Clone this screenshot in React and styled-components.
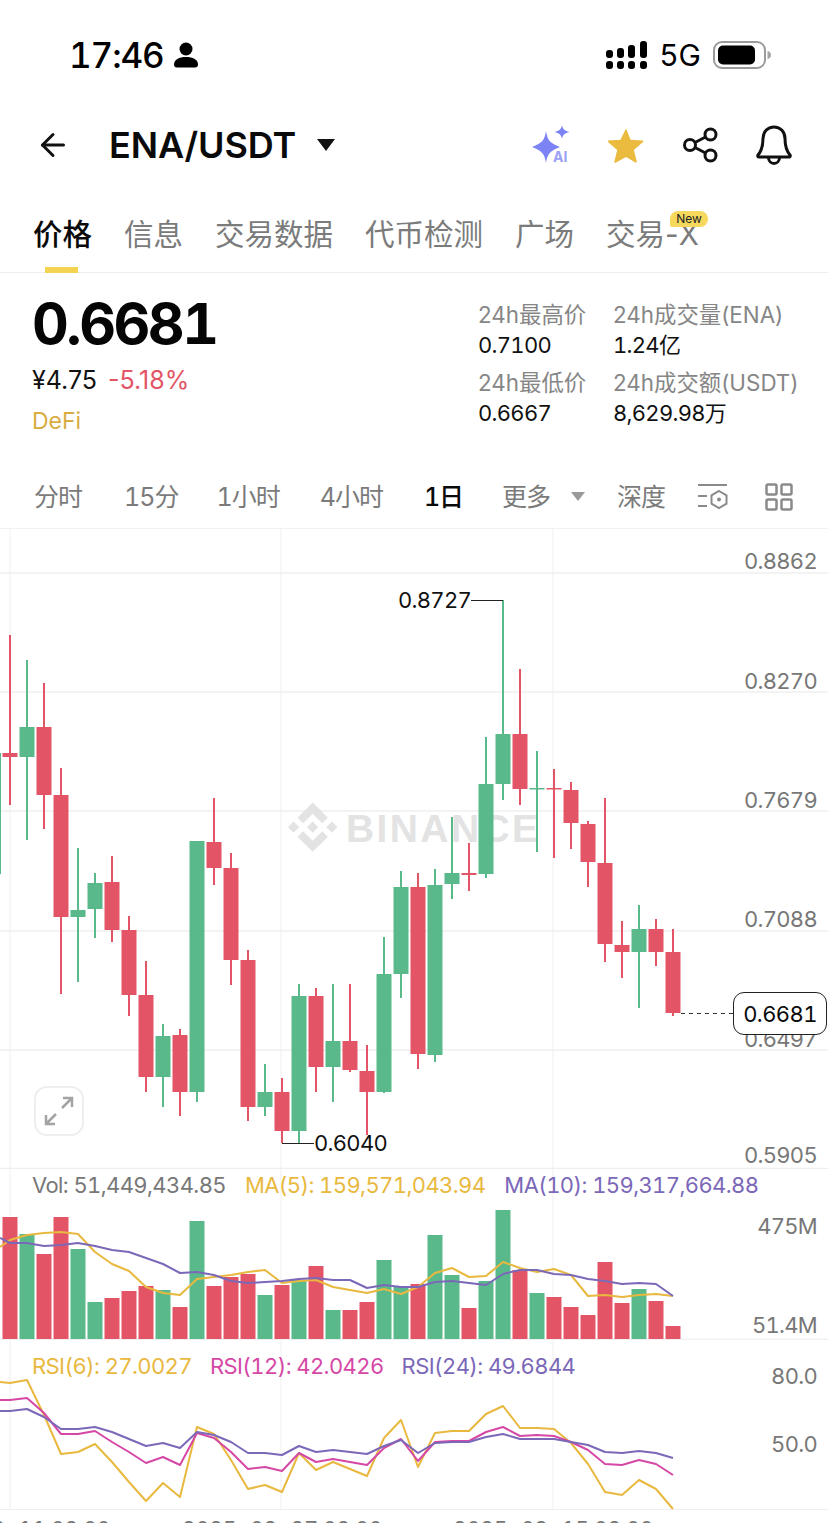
import React from "react";
import styled, { createGlobalStyle } from "styled-components";
import { ArrowLeft } from "lucide-react";

const GREEN = "#5ab98a";
const RED = "#e35566";
const YELLOW = "#e8b83f";
const PURPLE = "#7b68b8";
const MAGENTA = "#d548a6";
const GRID = "#efefef";
const GREY = "#777777";

// [colour, wick top, body top, body bottom, wick bottom]
const candles = [
  ["r", 635, 753, 757, 805],
  ["g", 660, 727, 757, 840],
  ["r", 683, 727, 795, 829],
  ["r", 768, 795, 917, 994],
  ["g", 848, 910, 917, 982],
  ["g", 873, 883, 909, 938],
  ["r", 856, 882, 930, 942],
  ["r", 916, 930, 995, 1016],
  ["r", 961, 995, 1077, 1092],
  ["g", 1024, 1036, 1077, 1107],
  ["r", 1029, 1035, 1092, 1116],
  ["g", 841, 841, 1092, 1102],
  ["r", 798, 842, 868, 885],
  ["r", 853, 868, 960, 985],
  ["r", 950, 960, 1107, 1121],
  ["g", 1064, 1092, 1107, 1116],
  ["r", 1078, 1092, 1131, 1143],
  ["g", 984, 996, 1131, 1143],
  ["r", 988, 996, 1067, 1092],
  ["g", 984, 1041, 1067, 1102],
  ["r", 984, 1041, 1070, 1072],
  ["r", 1045, 1071, 1092, 1135],
  ["g", 937, 974, 1092, 1093],
  ["g", 871, 887, 974, 998],
  ["r", 873, 887, 1054, 1069],
  ["g", 869, 885, 1055, 1062],
  ["g", 817, 873, 884, 899],
  ["r", 843, 873, 875, 891],
  ["g", 737, 784, 874, 878],
  ["g", 600, 734, 784, 800],
  ["r", 669, 734, 789, 805],
  ["g", 751, 788, 789.5, 852],
  ["r", 769, 788, 789.5, 858],
  ["r", 782, 790, 823, 849],
  ["r", 821, 824, 862, 887],
  ["r", 798, 863, 944, 962],
  ["r", 921, 945, 952, 978],
  ["g", 905, 929, 952, 1008],
  ["r", 919, 929, 952, 966],
  ["r", 929, 952, 1013, 1016],
];

const volumeTops = [
  1217, 1234, 1254, 1217, 1249, 1302, 1298, 1291, 1286, 1290, 1307, 1221, 1286, 1277, 1274, 1295,
  1285, 1280, 1266, 1310, 1310, 1302, 1260, 1287, 1284, 1235, 1275, 1308, 1281, 1210, 1270, 1293,
  1297, 1307, 1315, 1262, 1303, 1289, 1301, 1326,
];

const ma5 = [1247, 1240, 1235, 1233, 1232, 1234, 1252, 1264, 1271, 1287, 1293, 1295, 1279, 1277, 1275, 1272, 1270, 1283, 1281, 1280, 1287, 1290, 1293, 1289, 1294, 1287, 1273, 1268, 1277, 1276, 1262, 1268, 1272, 1269, 1275, 1296, 1295, 1297, 1295, 1294, 1296];
const ma10 = [1238, 1243, 1243, 1246, 1245, 1243, 1246, 1250, 1252, 1258, 1264, 1273, 1272, 1275, 1281, 1283, 1282, 1281, 1279, 1278, 1280, 1280, 1288, 1285, 1287, 1287, 1282, 1281, 1283, 1285, 1274, 1270, 1270, 1274, 1275, 1279, 1281, 1284, 1283, 1284, 1296];

const rsi6 = [1382, 1383, 1380, 1415, 1454, 1452, 1444, 1462, 1482, 1501, 1483, 1497, 1427, 1434, 1460, 1489, 1485, 1492, 1453, 1470, 1462, 1469, 1476, 1438, 1420, 1467, 1433, 1431, 1431, 1414, 1406, 1428, 1428, 1429, 1443, 1464, 1492, 1495, 1480, 1489, 1509];
const rsi12 = [1400, 1400, 1398, 1413, 1434, 1434, 1431, 1442, 1452, 1463, 1457, 1465, 1433, 1438, 1452, 1469, 1467, 1471, 1453, 1462, 1459, 1462, 1465, 1448, 1439, 1461, 1442, 1441, 1441, 1432, 1427, 1436, 1435, 1436, 1442, 1450, 1464, 1465, 1460, 1464, 1475];
const rsi24 = [1411, 1411, 1409, 1417, 1429, 1429, 1427, 1432, 1439, 1446, 1443, 1448, 1432, 1435, 1442, 1453, 1453, 1455, 1446, 1452, 1450, 1452, 1454, 1446, 1440, 1453, 1443, 1442, 1442, 1437, 1434, 1439, 1439, 1439, 1442, 1445, 1452, 1453, 1451, 1453, 1458];

const candleX = (i) => 10 + 17 * i;
const linePoints = (values) => values.map((y, i) => `${candleX(i - 1) < 0 ? 0 : candleX(i - 1)},${y}`).join(" ");
const colourOf = (c) => (c === "g" ? GREEN : RED);

const priceLabels = [
  ["0.8862", 569],
  ["0.8270", 689],
  ["0.7679", 808],
  ["0.7088", 927],
  ["0.6497", 1047],
  ["0.5905", 1163],
];

const GlobalStyle = createGlobalStyle`
  html, body {
    margin: 0;
    padding: 0;
    background: #fff;
  }
  body {
    font-family: Inter, "Noto Sans CJK SC", sans-serif;
    font-variant-numeric: tabular-nums;
  }
`;

const Page = styled.div`
  width: 828px;
  height: 1523px;
  overflow: hidden;
  background: #fff;
`;

const StatusBar = styled.div`
  height: 110px;
  padding: 0 56px 0 69px;
  box-sizing: border-box;
  display: flex;
  align-items: center;
  color: #000;
`;

const Clock = styled.span`
  font-size: 35px;
  font-weight: 500;
  letter-spacing: -1.1px;
  margin-right: 10px;
`;

const StatusRight = styled.div`
  margin-left: auto;
  display: flex;
  align-items: center;
`;

const NetLabel = styled.span`
  font-size: 30px;
  font-weight: 400;
  margin: 0 12px 0 11px;
`;

const Header = styled.div`
  height: 70px;
  padding: 0 36px 0 37px;
  display: flex;
  align-items: center;
`;

const BackIcon = styled(ArrowLeft)`
  width: 36px;
  height: 36px;
  margin-left: -2px;
  color: #111;
`;

const Pair = styled.span`
  margin-left: 38px;
  font-size: 36px;
  font-weight: 600;
  color: #0a0a0a;
  letter-spacing: -0.1px;
`;

const Caret = styled.span`
  margin-left: ${(p) => p.$gap || 21}px;
  width: 0;
  height: 0;
  border-left: ${(p) => p.$size || 9}px solid transparent;
  border-right: ${(p) => p.$size || 9}px solid transparent;
  border-top: ${(p) => (p.$size ? p.$size + 2 : 12)}px solid ${(p) => p.$color || "#111"};
`;

const HeaderIcons = styled.div`
  margin-left: auto;
  display: flex;
  align-items: center;
  gap: 38px;

  & > svg:first-child {
    margin-right: -4px;
  }
`;

const Tabs = styled.div`
  height: 93px;
  box-sizing: border-box;
  padding: 34px 0 0 33px;
  display: flex;
  gap: 32px;
  border-bottom: 1px solid #eeeeee;
`;

const Tab = styled.div`
  position: relative;
  height: 40px;
  line-height: 40px;
  font-size: 29.5px;
  font-variant-numeric: normal;
  color: ${(p) => (p.$active ? "#0a0a0a" : "#7b7b7b")};
  font-weight: ${(p) => (p.$active ? 500 : 400)};
  white-space: nowrap;

  &::after {
    content: "";
    display: ${(p) => (p.$active ? "block" : "none")};
    position: absolute;
    left: 12px;
    top: 53px;
    width: 33px;
    height: 6px;
    background: #f3d350;
  }
`;

const NewBadge = styled.span`
  position: absolute;
  left: 64px;
  top: -3px;
  width: 38px;
  height: 16px;
  border-radius: 8px 8px 8px 2px;
  background: #f6d85d;
  font-size: 12px;
  line-height: 16px;
  text-align: center;
  color: #222;
`;

const Summary = styled.div`
  height: 192px;
  box-sizing: border-box;
  display: flex;
  justify-content: space-between;
`;

const PriceBlock = styled.div`
  padding: 26px 0 0 32px;
`;

const LastPrice = styled.div`
  font-size: 57px;
  line-height: 50px;
  font-weight: 700;
  color: #050505;
  letter-spacing: -2.5px;
`;

const SubPrice = styled.div`
  margin-top: 16px;
  line-height: 30px;
  font-size: 25px;
  font-variant-numeric: normal;
  color: #111;
  display: flex;
  gap: 11px;
`;

const Change = styled.span`
  color: ${RED};
`;

const Tag = styled.div`
  margin-top: 11px;
  line-height: 30px;
  font-size: 23px;
  color: #d8ac3f;
`;

const StatsGrid = styled.div`
  width: 350px;
  padding-top: 27px;
  display: grid;
  grid-template-columns: 135px 1fr;
  grid-auto-rows: 60px;
  row-gap: 8px;
`;

const Stat = styled.div`
  line-height: 30px;
  white-space: nowrap;
`;

const StatLabel = styled.div`
  font-size: 22.4px;
  font-variant-numeric: normal;
  color: #868686;
`;

const StatValue = styled.div`
  font-size: 22px;
  letter-spacing: -0.7px;
  color: #111;
`;

const Intervals = styled.div`
  height: 64px;
  box-sizing: border-box;
  padding: 0 34px;
  display: flex;
  align-items: center;
  border-bottom: 1px solid #f1f1f1;
`;

const Interval = styled.span`
  margin-left: ${(p) => p.$gap ?? 41}px;
  font-size: 25px;
  letter-spacing: -1px;
  line-height: 36px;
  white-space: nowrap;
  color: ${(p) => (p.$active ? "#0a0a0a" : "#7b7b7b")};
  font-weight: ${(p) => (p.$active ? 500 : 400)};
`;

const IntervalIcon = styled.svg`
  display: block;
  flex: none;
  margin-left: ${(p) => p.$gap}px;
`;

const Pane = styled.div`
  position: relative;
  height: ${(p) => p.$height}px;
`;

const PaneSvg = styled.svg`
  display: block;
  width: 828px;
  height: 100%;
`;

const AxisText = styled.text`
  font-family: Inter, sans-serif;
  font-size: 22px;
  letter-spacing: -0.7px;
  fill: ${GREY};
  text-anchor: ${(p) => p.$anchor || "end"};
`;

const MarkText = styled.text`
  font-family: Inter, sans-serif;
  font-size: 22px;
  letter-spacing: -0.7px;
  fill: #111;
`;

const Watermark = styled.text`
  font-family: "Liberation Sans", sans-serif;
  font-size: 39px;
  font-weight: 700;
  letter-spacing: 2.4px;
  fill: #e3e3e3;
`;

const ExpandButton = styled.div`
  position: absolute;
  left: 34px;
  top: 557px;
  width: 50px;
  height: 50px;
  box-sizing: border-box;
  border: 2px solid #eeeeee;
  border-radius: 13px;
  background: #fff;
  display: flex;
  align-items: center;
  justify-content: center;
`;

const LastTag = styled.div`
  position: absolute;
  left: 733px;
  top: 463px;
  width: 94px;
  height: 43px;
  box-sizing: border-box;
  border: 1px solid #222;
  border-radius: 11px;
  background: #fff;
  text-align: center;
  font-size: 22px;
  letter-spacing: -0.6px;
  line-height: 43px;
  color: #0a0a0a;
`;

const Legend = styled.div`
  position: absolute;
  left: 32px;
  top: ${(p) => p.$top}px;
  display: flex;
  gap: ${(p) => p.$gap}px;
  font-size: 22px;
  letter-spacing: -0.6px;
  line-height: 30px;
  white-space: nowrap;
`;

const LegendItem = styled.span`
  color: ${(p) => p.$color};
`;

function StatusIcons() {
  const cols = [
    [606, 50],
    [617, 48],
    [628, 45],
    [640, 41],
  ];
  return (
    <>
      <svg width="42" height="29" viewBox="606 41 42 29">
        {cols.map(([x, top]) => (
          <g key={x} fill="#000">
            <rect x={x} y={top} width="7" height={58 - top} rx="3" />
            <rect x={x} y="61" width="7" height="8" rx="3" />
          </g>
        ))}
      </svg>
      <NetLabel>5G</NetLabel>
      <svg width="59" height="28" viewBox="714 41 59 28">
        <rect x="715" y="42" width="51" height="26" rx="8" fill="none" stroke="#9b9b9b" strokeWidth="2" />
        <rect x="719" y="45.5" width="37" height="19" rx="5" fill="#000" />
        <path d="M768.5 51c2.4.6 3.5 2 3.5 4s-1.100 3.400-3.500 4z" fill="#a5a5a5" />
      </svg>
    </>
  );
}

function AiIcon() {
  return (
    <svg width="42" height="40" viewBox="532 126 42 40">
      <path d="M546 132c1.500 9 3.500 12 14 16-10.500 4-12.500 7-14 16-1.500-9-3.500-12-14-16 10.500-4 12.500-7 14-16z" fill="#7c83f5" />
      <path d="M562 126c.8 4 2 5.500 7.500 7-5.500 1.500-6.700 3-7.500 7-.8-4-2-5.500-7.500-7 5.500-1.500 6.700-3 7.500-7z" fill="#7c83f5" />
      <text x="553" y="163" fontFamily="Inter, sans-serif" fontSize="14" fontWeight="700" fill="#9ba0f5">
        AI
      </text>
    </svg>
  );
}

function HeaderButtons() {
  return (
    <HeaderIcons>
      <AiIcon />
      <svg width="36" height="36" viewBox="0 0 36 36">
        <path
          d="M18 1.500l4.600 11.200 12 .9c.8.100 1.100 1 .5 1.500l-9.200 7.800 2.900 11.700c.2.800-.7 1.400-1.400 1L18 30l-10.300 5.700c-.7.400-1.600-.2-1.400-1l2.900-11.700L0 15.100c-.6-.5-.3-1.400.5-1.500l12-.9z"
          fill="#eabb3f"
        />
      </svg>
      <svg width="36" height="36" viewBox="0 0 36 36" fill="none" stroke="#111" strokeWidth="3">
        <circle cx="28.500" cy="7.500" r="5.500" />
        <circle cx="8" cy="18" r="5.500" />
        <circle cx="28.500" cy="28.500" r="5.500" />
        <path d="M13 15.500l10.500-5.500M13 20.500l10.500 5.500" />
      </svg>
      <svg width="36" height="40" viewBox="0 0 36 40" fill="none" stroke="#111" strokeWidth="3" strokeLinejoin="round">
        <path d="M18 2c-6.500 0-11 5-11 11.500 0 8-1.500 12.500-5 16.500-.6.800-.2 2 1 2h30c1.200 0 1.600-1.200 1-2-3.500-4-5-8.500-5-16.500C29 7 24.500 2 18 2z" />
        <path d="M12.500 32.500c0 3.500 2.500 6 5.500 6s5.500-2.500 5.500-6" />
      </svg>
    </HeaderIcons>
  );
}

function MainChart() {
  return (
    <PaneSvg viewBox="0 529 828 640">
      {[573, 692, 811, 931, 1050, 1168.500].map((y) => (
        <line key={y} x1="0" x2="828" y1={y} y2={y} stroke={GRID} strokeWidth="1.500" />
      ))}
      {[10, 281, 553].map((x) => (
        <line key={x} x1={x} x2={x} y1="529" y2="1169" stroke={GRID} strokeWidth="1" />
      ))}

      <g transform="translate(288 802.500) scale(0.39)" fill="#e3e3e3">
        <path d="M38.730 53.200l24.590-24.580 24.600 24.600 14.300-14.310L63.320 0 24.420 38.900zM0 63.310l14.300-14.310 14.310 14.310-14.310 14.300zM38.730 73.410l24.590 24.590 24.600-24.600 14.310 14.290-38.900 38.910-38.910-38.880-.020-.020zM98.010 63.310l14.300-14.310 14.310 14.300-14.310 14.320z" />
        <path d="M77.830 63.300L63.320 48.780 52.590 59.510l-1.230 1.230-2.540 2.540 14.500 14.500 14.510-14.470z" />
      </g>
      <Watermark x="346" y="842">
        BINANCE
      </Watermark>

      {priceLabels.map(([label, y]) => (
        <AxisText key={label} x="817" y={y}>
          {label}
        </AxisText>
      ))}

      {/* first candle is cut by the left edge */}
      <rect x="-1" y="753" width="2" height="121" fill={GREEN} />
      {candles.map(([c, wickTop, bodyTop, bodyBottom, wickBottom], i) => {
        const x = candleX(i);
        return (
          <g key={x} fill={colourOf(c)}>
            <rect x={x - 1} y={wickTop} width="2" height={wickBottom - wickTop} />
            <rect x={x - 7.500} y={bodyTop} width="15" height={bodyBottom - bodyTop} />
          </g>
        );
      })}

      <path d="M471 600.500h32M282 1143.500h32" stroke="#222" strokeWidth="1" fill="none" />
      <MarkText x="398" y="608">
        0.8727
      </MarkText>
      <MarkText x="314" y="1151">
        0.6040
      </MarkText>
      <path d="M681 1013.500h52" stroke="#333" strokeWidth="1" strokeDasharray="4 4" fill="none" />
    </PaneSvg>
  );
}

function VolumeChart() {
  return (
    <PaneSvg viewBox="0 1169 828 171">
      <line x1="0" x2="828" y1="1339.500" y2="1339.500" stroke={GRID} strokeWidth="1.500" />
      {[10, 281, 553].map((x) => (
        <line key={x} x1={x} x2={x} y1="1169" y2="1340" stroke={GRID} strokeWidth="1" />
      ))}
      {volumeTops.map((top, i) => (
        <rect key={i} x={candleX(i) - 7.500} y={top} width="15" height={1339 - top} fill={colourOf(candles[i][0])} />
      ))}
      <polyline points={linePoints(ma5)} fill="none" stroke={YELLOW} strokeWidth="2" strokeLinejoin="round" />
      <polyline points={linePoints(ma10)} fill="none" stroke={PURPLE} strokeWidth="2" strokeLinejoin="round" />
      <AxisText x="817" y="1234">
        475M
      </AxisText>
      <AxisText x="817" y="1333">
        51.4M
      </AxisText>
    </PaneSvg>
  );
}

function RsiChart() {
  return (
    <PaneSvg viewBox="0 1340 828 183">
      <line x1="0" x2="828" y1="1509.500" y2="1509.500" stroke={GRID} strokeWidth="1" />
      {[10, 281, 553].map((x) => (
        <line key={x} x1={x} x2={x} y1="1340" y2="1509" stroke={GRID} strokeWidth="1" />
      ))}
      <polyline points={linePoints(rsi6)} fill="none" stroke={YELLOW} strokeWidth="2" strokeLinejoin="round" />
      <polyline points={linePoints(rsi12)} fill="none" stroke={MAGENTA} strokeWidth="2" strokeLinejoin="round" />
      <polyline points={linePoints(rsi24)} fill="none" stroke={PURPLE} strokeWidth="2" strokeLinejoin="round" />
      <AxisText x="817" y="1384">
        80.0
      </AxisText>
      <AxisText x="817" y="1452">
        50.0
      </AxisText>
      {[
        ["2025-02-11 08:00", 10],
        ["2025-02-27 08:00", 282],
        ["2025-03-15 08:00", 553],
      ].map(([label, x]) => (
        <AxisText key={label} x={x} y="1537" $anchor="middle">
          {label}
        </AxisText>
      ))}
    </PaneSvg>
  );
}

export default function App() {
  return (
    <Page>
      <GlobalStyle />
      <StatusBar>
        <Clock>17:46</Clock>
        <svg width="24" height="26" viewBox="0 0 24 26" fill="#000">
          <circle cx="12" cy="7" r="6.500" />
          <path d="M0 22.500C0 17.500 5 15 12 15s12 2.500 12 7.500c0 2-1 3-3 3H3c-2 0-3-1-3-3z" />
        </svg>
        <StatusRight>
          <StatusIcons />
        </StatusRight>
      </StatusBar>

      <Header>
        <BackIcon strokeWidth={2} />
        <Pair>ENA/USDT</Pair>
        <Caret />
        <HeaderButtons />
      </Header>

      <Tabs>
        <Tab $active>价格</Tab>
        <Tab>信息</Tab>
        <Tab>交易数据</Tab>
        <Tab>代币检测</Tab>
        <Tab>广场</Tab>
        <Tab>
          交易-X
          <NewBadge>New</NewBadge>
        </Tab>
      </Tabs>

      <Summary>
        <PriceBlock>
          <LastPrice>0.6681</LastPrice>
          <SubPrice>
            <span>¥4.75</span>
            <Change>-5.18%</Change>
          </SubPrice>
          <Tag>DeFi</Tag>
        </PriceBlock>
        <StatsGrid>
          <Stat>
            <StatLabel>24h最高价</StatLabel>
            <StatValue>0.7100</StatValue>
          </Stat>
          <Stat>
            <StatLabel>24h成交量(ENA)</StatLabel>
            <StatValue>1.24亿</StatValue>
          </Stat>
          <Stat>
            <StatLabel>24h最低价</StatLabel>
            <StatValue>0.6667</StatValue>
          </Stat>
          <Stat>
            <StatLabel>24h成交额(USDT)</StatLabel>
            <StatValue>8,629.98万</StatValue>
          </Stat>
        </StatsGrid>
      </Summary>

      <Intervals>
        <Interval $gap={0}>分时</Interval>
        <Interval $gap={42}>15分</Interval>
        <Interval $gap={38}>1小时</Interval>
        <Interval $gap={40}>4小时</Interval>
        <Interval $gap={41} $active>1日</Interval>
        <Interval $gap={39}>更多</Interval>
        <Caret $gap={21} $size={7.5} $color="#9a9a9a" />
        <Interval $gap={32}>深度</Interval>
        <IntervalIcon $gap={33} width="30" height="30" viewBox="0 0 30 30" fill="none" stroke="#8a8a8a" strokeWidth="2">
          <path d="M0 3h29M0 14h9M0 24h9" />
          <path d="M21 9l7.500 4.300v8.400L21 26l-7.500-4.300v-8.400z" />
          <circle cx="21" cy="17.500" r="2" fill="#8a8a8a" stroke="none" />
        </IntervalIcon>
        <IntervalIcon $gap={37} width="28" height="28" viewBox="0 0 28 28" fill="none" stroke="#8a8a8a" strokeWidth="2.500">
          <rect x="1.500" y="1.500" width="10" height="10" rx="1.500" />
          <rect x="16.500" y="1.500" width="10" height="10" rx="1.500" />
          <rect x="1.500" y="16.500" width="10" height="10" rx="1.500" />
          <rect x="16.500" y="16.500" width="10" height="10" rx="1.500" />
        </IntervalIcon>
      </Intervals>

      <Pane $height={640}>
        <MainChart />
        <ExpandButton>
          <svg width="30" height="30" viewBox="0 0 30 30" fill="none" stroke="#a3a3a3" strokeWidth="2.500">
            <path d="M18 12L28 2M19 2h9v9M12 18L2 28M2 19v9h9" />
          </svg>
        </ExpandButton>
        <LastTag>0.6681</LastTag>
      </Pane>

      <Pane $height={171}>
        <VolumeChart />
        <Legend $top={1} $gap={19}>
          <LegendItem $color={GREY}>Vol: 51,449,434.85</LegendItem>
          <LegendItem $color={YELLOW}>MA(5): 159,571,043.94</LegendItem>
          <LegendItem $color={PURPLE}>MA(10): 159,317,664.88</LegendItem>
        </Legend>
      </Pane>

      <Pane $height={183}>
        <RsiChart />
        <Legend $top={11} $gap={18}>
          <LegendItem $color={YELLOW}>RSI(6): 27.0027</LegendItem>
          <LegendItem $color={MAGENTA}>RSI(12): 42.0426</LegendItem>
          <LegendItem $color={PURPLE}>RSI(24): 49.6844</LegendItem>
        </Legend>
      </Pane>
    </Page>
  );
}
